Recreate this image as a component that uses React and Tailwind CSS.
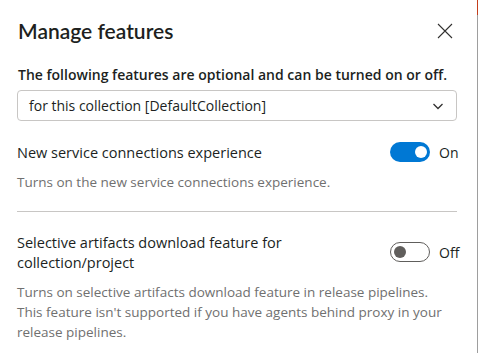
import { useState } from "react";

function Toggle({ on, onChange }) {
  return (
    <button
      onClick={onChange}
      className={`w-10 h-5 rounded-full flex items-center px-[3px] shrink-0 ${
        on ? "bg-[#0078d4] justify-end" : "bg-white border border-[#605e5c] justify-start"
      }`}
    >
      <span className={`w-3 h-3 rounded-full ${on ? "bg-white" : "bg-[#605e5c]"}`}></span>
    </button>
  );
}

function FeatureRow({ title, desc, on, onChange }) {
  return (
    <div className="flex flex-col">
      <div className="flex items-center justify-between">
        <div className="text-[14.5px] leading-5 text-[#201f1e] w-[300px]">{title}</div>
        <div className="flex items-center gap-[9px] w-[67px] -mt-[2px]">
          <Toggle on={on} onChange={onChange} />
          <span className="text-[14px] text-[#201f1e]">{on ? "On" : "Off"}</span>
        </div>
      </div>
      <p className="mt-[9px] text-[13.5px] leading-5 text-[#707070]">{desc}</p>
    </div>
  );
}

export default function App() {
  const [svc, setSvc] = useState(true);
  const [artifacts, setArtifacts] = useState(false);

  return (
    <div className="w-[478px] h-[353px] flex bg-[#f3f2f1] font-['Segoe_UI','Open_Sans',sans-serif] overflow-hidden">
      <div className="w-[477px] h-full bg-white pl-[17px] pr-[20px] pt-[17px]">
        <div className="flex items-center justify-between">
          <h1 className="font-['Lato',sans-serif] text-[21px] leading-7 font-semibold text-[#201f1e] ml-[1px]">
            Manage features
          </h1>
          <button className="w-4 h-4 mr-[4px] text-[#323130]">
            <svg viewBox="0 0 16 16" className="w-4 h-4" fill="none" stroke="currentColor" strokeWidth="1.1">
              <path d="M1 1 L15 15 M15 1 L1 15" />
            </svg>
          </button>
        </div>

        <p className="mt-[20px] text-[14px] leading-5 font-semibold text-[#201f1e] ml-[1px]">
          The following features are optional and can be turned on or off.
        </p>

        <div className="mt-[5px] h-[31px] border border-[#c8c6c4] rounded-sm flex items-center justify-between pl-[11px] pr-[12px]">
          <span className="text-[14px] text-[#201f1e]">for this collection [DefaultCollection]</span>
          <svg viewBox="0 0 12 12" className="w-3 h-3 text-[#323130]" fill="none" stroke="currentColor" strokeWidth="1.3">
            <path d="M1.5 4 L6 8.5 L10.5 4" />
          </svg>
        </div>

        <div className="mt-[22px]">
          <FeatureRow
            title="New service connections experience"
            desc="Turns on the new service connections experience."
            on={svc}
            onChange={() => setSvc(!svc)}
          />
        </div>

        <div className="mt-[19px] h-px bg-[#c8c6c4]"></div>

        <div className="mt-[21px]">
          <FeatureRow
            title="Selective artifacts download feature for collection/project"
            desc="Turns on selective artifacts download feature in release pipelines. This feature isn't supported if you have agents behind proxy in your release pipelines."
            on={artifacts}
            onChange={() => setArtifacts(!artifacts)}
          />
        </div>
      </div>
      <div className="w-px h-full flex flex-col">
        <div className="h-[15px] bg-[#c43e1c]"></div>
        <div className="flex-1 bg-[#9e9e9e]"></div>
      </div>
    </div>
  );
}
